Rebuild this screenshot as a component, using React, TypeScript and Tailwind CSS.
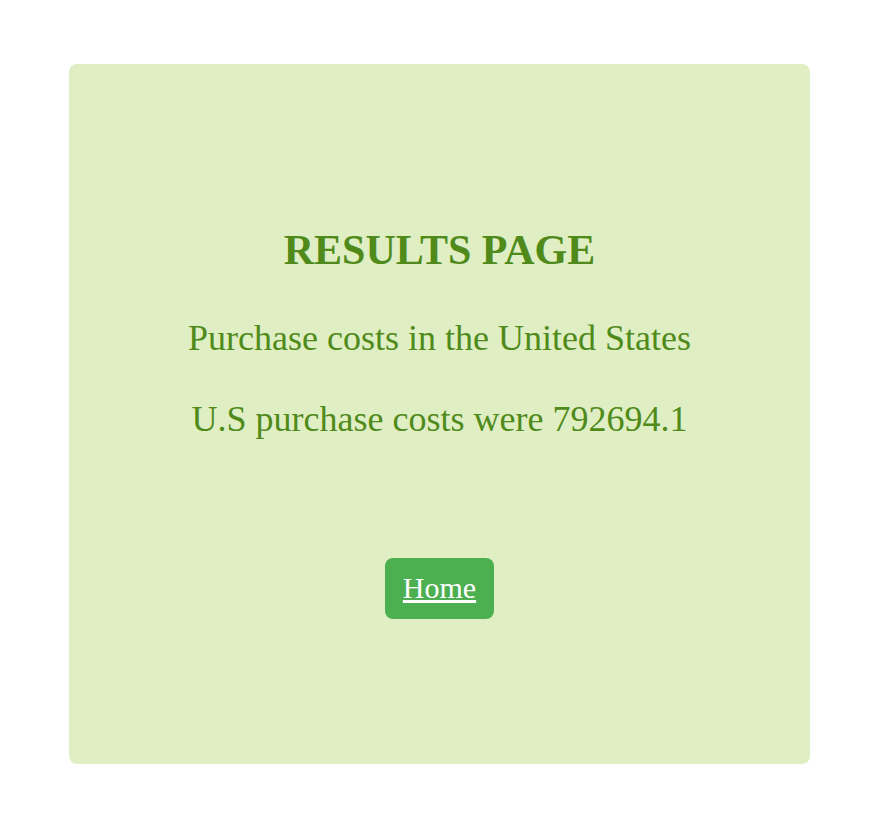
import React from "react";

export default function App() {
  return (
    <div className="w-[876px] h-[828px] bg-white pt-[64px]" style={{ fontFamily: '"Liberation Serif", "Times New Roman", serif' }}>
      <div className="ml-[69px] w-[741px] h-[700px] rounded-[8px] bg-[#dfefc3] flex flex-col items-center text-[#4f8a1a]">
        <h1 className="mt-[163px] text-[42px] leading-[46px] font-bold">RESULTS PAGE</h1>
        <p className="mt-[45px] text-[36px] leading-[40px]">Purchase costs in the United States</p>
        <p className="mt-[41px] text-[36px] leading-[40px]">U.S purchase costs were 792694.1</p>
        <a href="#" className="mt-[119px] bg-[#4caf50] rounded-[8px] px-[18px] pt-[12px] pb-[14px] text-[30px] leading-[35px] text-white underline">Home</a>
      </div>
    </div>
  );
}
